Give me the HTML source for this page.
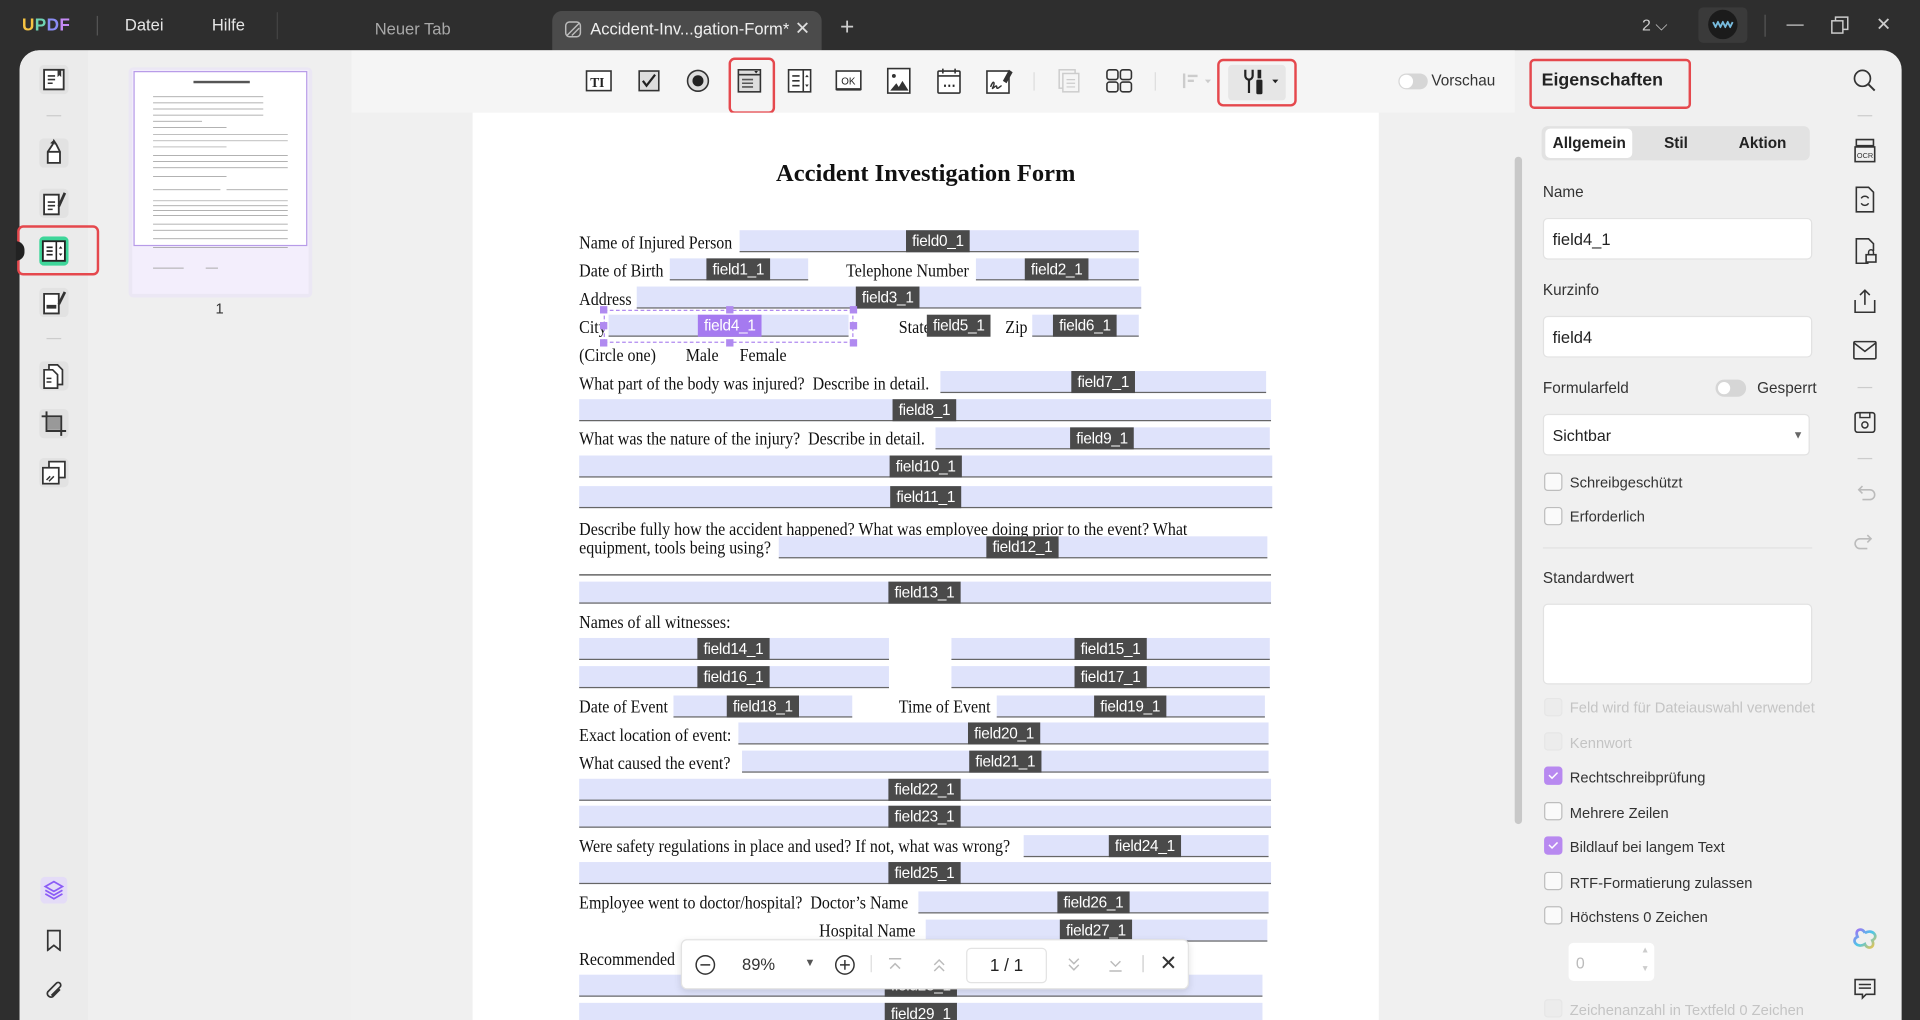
<!DOCTYPE html>
<html><head><meta charset="utf-8">
<style>
*{box-sizing:border-box;margin:0;padding:0}
html,body{width:1920px;height:1020px;overflow:hidden;background:#2e2e2e}
#w{position:absolute;left:0;top:0;width:1568px;height:833px;transform:scale(1.22449);transform-origin:0 0;font-family:"Liberation Sans",sans-serif;background:#2e2e2e}
.a{position:absolute}
.tb{color:#e6e6e6;font-size:13.5px}
.d{font-family:"Liberation Serif",serif;font-size:14.5px;color:#111;position:absolute;white-space:nowrap;transform:scaleX(.9) translateY(1px);transform-origin:0 50%;line-height:16px}
.f{position:absolute;height:18px;background:#dfe3fb;border-bottom:1.3px solid #666}
.l{position:absolute;height:18px;line-height:18px;background:#4a4a4a;color:#fff;font-size:12.5px;padding:0 5px;transform:translateX(-50%);white-space:nowrap;letter-spacing:-.2px}
.ic{position:absolute;width:24px;height:24px}
.p{color:#333;font-size:12.5px;position:absolute;white-space:nowrap}
.inp{position:absolute;background:#fff;border:1px solid #e2e2e2;border-radius:4px}
.cb{position:absolute;width:15px;height:15px;border:1.3px solid #bdbdbd;border-radius:3px;background:#fafafa}
.cb.on{background:#b889f0;border-color:#b889f0}
.cb.dis{border-color:#e6e6e6;background:#ececec}
.ri{position:absolute;left:1512px;width:22px;height:22px}
</style></head><body><div id="w">
<!-- title bar -->
<div class="a" style="left:18px;top:12px;font-weight:bold;font-size:14px;letter-spacing:.3px"><span style="color:#f6c443">U</span><span style="color:#6fd3b4">P</span><span style="color:#8b8df5">D</span><span style="color:#c58af5">F</span></div>
<div class="a" style="left:79px;top:13px;width:1px;height:16px;background:#555"></div>
<div class="a tb" style="left:102px;top:13px">Datei</div>
<div class="a tb" style="left:173px;top:13px">Hilfe</div>
<div class="a" style="left:226px;top:10px;width:1px;height:22px;background:#444"></div>
<div class="a" style="left:306px;top:16px;color:#a8a8a8;font-size:13.5px">Neuer Tab</div>
<div class="a" style="left:451px;top:9px;width:220px;height:32px;background:#4b4b4b;border-radius:8px 8px 0 0"></div>
<svg class="a" style="left:461px;top:17px" width="14" height="14" viewBox="0 0 14 14"><rect x="1" y="1" width="12" height="12" rx="3" fill="none" stroke="#bbb" stroke-width="1.2"/><path d="M2 12L12 2M6 12L12 6" stroke="#bbb" stroke-width="1.2"/></svg>
<div class="a" style="left:482px;top:16px;color:#f0f0f0;font-size:13.5px">Accident-Inv...gation-Form*</div>
<div class="a" style="left:649px;top:14px;color:#ddd;font-size:15px">✕</div>
<div class="a" style="left:686px;top:11px;color:#ccc;font-size:20px;font-weight:300">+</div>
<div class="a" style="left:1341px;top:13px;color:#ccc;font-size:13px">2 ⌵</div>
<div class="a" style="left:1387px;top:6px;width:40px;height:29px;background:#3a3a3a;border-radius:4px"></div>
<div class="a" style="left:1395px;top:8px;width:24px;height:24px;border-radius:50%;background:#1b1b1b"></div>
<svg class="a" style="left:1398px;top:17px" width="18" height="6" viewBox="0 0 18 6"><path d="M1 1l2 4 2-4 2 4 2-4 2 4 2-4 2 4 2-4" fill="none" stroke="#7bd" stroke-width="1.5"/></svg>
<div class="a" style="left:1441px;top:12px;width:1px;height:18px;background:#555"></div>
<div class="a" style="left:1459px;top:20px;width:14px;height:1.3px;background:#ccc"></div>
<svg class="a" style="left:1495px;top:13px" width="15" height="15" viewBox="0 0 15 15"><rect x="1" y="4" width="9" height="10" fill="none" stroke="#ccc" stroke-width="1.2"/><path d="M4 4V1h10v10h-4" fill="none" stroke="#ccc" stroke-width="1.2"/></svg>
<div class="a" style="left:1532px;top:11px;color:#ccc;font-size:15px">✕</div>

<!-- main -->
<div class="a" style="left:16px;top:41px;width:1537px;height:792px;background:#f0f0f0;border-radius:16px 16px 0 0;overflow:hidden">
 <div class="a" style="left:0;top:0;width:56px;height:792px;background:#ebebeb"></div>
 <div class="a" style="left:56px;top:0;width:215px;height:792px;background:#efefef"></div>
 <div class="a" style="left:271px;top:0;width:950px;height:51px;background:#f5f5f5"></div>
</div>
<!-- left rail icons -->
<svg class="a" style="left:32px;top:53px" width="24" height="24" viewBox="0 0 24 24"><rect x="0" y="0" width="24" height="24" rx="4" fill="#e2e2e2"/><rect x="4" y="4" width="16" height="16" fill="#fff" stroke="#333" stroke-width="1.5"/><path d="M7 9h6M7 12h6M7 15h4" stroke="#333" stroke-width="1.3"/><path d="M15 4v6l1.5-1.5L18 10V4" fill="#333"/></svg>
<div class="a" style="left:38px;top:94px;width:12px;height:1px;background:#ccc"></div>
<svg class="a" style="left:32px;top:113px" width="24" height="24" viewBox="0 0 24 24"><rect width="24" height="24" rx="4" fill="#e2e2e2"/><path d="M7 20V11l4-6 1-3 2 3 3 6v9z" fill="#fff" stroke="#333" stroke-width="1.5"/><path d="M7 11h10" stroke="#333" stroke-width="1.5"/><path d="M9 4l2-2 2 3z" fill="#333"/></svg>
<svg class="a" style="left:32px;top:154px" width="24" height="24" viewBox="0 0 24 24"><rect width="24" height="24" rx="4" fill="#e2e2e2"/><path d="M4 5h12v16H4z" fill="#fff" stroke="#333" stroke-width="1.5"/><path d="M7 11h6M7 14h6M7 17h4" stroke="#333" stroke-width="1.3"/><path d="M15 14l5-11 2 1-5 11z" fill="#333"/></svg>
<div class="a" style="left:14px;top:184px;width:67px;height:41px;border:2.5px solid #e5484d;border-radius:5px"></div>
<div class="a" style="left:13px;top:197px;width:7px;height:16px;background:#222;border-radius:0 8px 8px 0"></div>
<svg class="a" style="left:32px;top:193px" width="24" height="24" viewBox="0 0 24 24"><rect width="24" height="24" rx="4" fill="#3ed69a"/><rect x="3" y="4" width="18" height="16" fill="#fff" stroke="#222" stroke-width="1.5"/><path d="M14 4v16M6 9h5M6 12h5M6 15h5" stroke="#222" stroke-width="1.3"/><path d="M16 10l1.5-2 1.5 2zM16 14l1.5 2 1.5-2z" fill="#222"/></svg>
<svg class="a" style="left:32px;top:235px" width="24" height="24" viewBox="0 0 24 24"><rect width="24" height="24" rx="4" fill="#e2e2e2"/><path d="M4 5h12v16H4z" fill="#fff" stroke="#333" stroke-width="1.5"/><path d="M6 14h8v3H6z" fill="#333"/><path d="M15 13l5-10 2 1-5 10z" fill="#333"/></svg>
<div class="a" style="left:38px;top:276px;width:12px;height:1px;background:#ccc"></div>
<svg class="a" style="left:32px;top:295px" width="24" height="24" viewBox="0 0 24 24"><rect width="24" height="24" rx="4" fill="#e2e2e2"/><path d="M8 3h7l4 4v12H8z" fill="#fff" stroke="#333" stroke-width="1.4"/><path d="M4 7h7l4 4v11H4z" fill="#fff" stroke="#333" stroke-width="1.4"/><path d="M6 14h4M6 17h4" stroke="#333" stroke-width="1.2"/></svg>
<svg class="a" style="left:32px;top:334px" width="24" height="24" viewBox="0 0 24 24"><rect width="24" height="24" rx="4" fill="#e2e2e2"/><path d="M6 2v16h16M2 6h16v16" fill="none" stroke="#333" stroke-width="1.6"/><rect x="7" y="7" width="10" height="10" fill="#999"/></svg>
<svg class="a" style="left:32px;top:374px" width="24" height="24" viewBox="0 0 24 24"><rect width="24" height="24" rx="4" fill="#e2e2e2"/><rect x="8" y="3" width="13" height="13" fill="#fff" stroke="#333" stroke-width="1.4"/><rect x="3" y="8" width="13" height="13" fill="#fff" stroke="#333" stroke-width="1.4"/><path d="M6 18l3-3M8 19l4-4" stroke="#333" stroke-width="1.2"/></svg>
<svg class="a" style="left:33px;top:716px" width="22" height="22" viewBox="0 0 22 22"><rect width="22" height="22" rx="4" fill="#e4dcf7"/><path d="M11 4l7 4-7 4-7-4z" fill="none" stroke="#8b5cf6" stroke-width="1.4"/><path d="M4 11l7 4 7-4M4 14l7 4 7-4" fill="none" stroke="#8b5cf6" stroke-width="1.4"/></svg>
<svg class="a" style="left:36px;top:759px" width="16" height="18" viewBox="0 0 16 18"><path d="M3 1h10v16l-5-4-5 4z" fill="none" stroke="#333" stroke-width="1.4"/></svg>
<svg class="a" style="left:35px;top:799px" width="18" height="20" viewBox="0 0 18 20"><path d="M14 9l-6 6a3 3 0 01-4-4l7-7a2 2 0 013 3l-7 7" fill="none" stroke="#333" stroke-width="1.4"/></svg>

<!-- thumbnail -->
<div class="a" style="left:105px;top:55px;width:150px;height:188px;background:#ebe7f4;border-radius:4px"></div>
<div class="a" style="left:108px;top:57px;width:144px;height:183px;background:#f3eefc"></div>
<div class="a" style="left:109px;top:58px;width:142px;height:143px;background:#fff;border:1px solid #b79be8"></div>
<svg class="a" style="left:120px;top:62px" width="120" height="160" viewBox="0 0 120 160"><rect x="38" y="4" width="46" height="2" fill="#555"/><g stroke="#999" stroke-width=".6"><path d="M5 17h90M5 22h90M5 27h90M5 32h90M5 37h40M5 42h60M5 48h110M5 53h110M5 58h60M5 65h110M5 70h110M5 75h110M5 82h60M5 93h55M65 93h50M5 102h110M5 106h110M5 110h110M5 114h110M5 121h110M5 126h110M5 133h110M5 140h110"/></g><path d="M5 157h25M48 157h10" stroke="#aaa" stroke-width=".8"/></svg>
<div class="a" style="left:176px;top:245px;font-size:12px;color:#333">1</div>

<!-- toolbar icons -->
<svg class="a" style="left:478px;top:56px" width="22" height="20" viewBox="0 0 22 20"><rect x="1" y="2" width="20" height="16" fill="#fff" stroke="#333" stroke-width="1.3"/><text x="4" y="15" font-family="Liberation Serif" font-weight="bold" font-size="11" fill="#222">TI</text></svg>
<svg class="a" style="left:521px;top:57px" width="18" height="18" viewBox="0 0 18 18"><rect x="1" y="1" width="16" height="16" fill="#ddd" stroke="#333" stroke-width="1.3"/><path d="M4 9l3 4 7-9" fill="none" stroke="#222" stroke-width="1.8"/></svg>
<svg class="a" style="left:560px;top:56px" width="20" height="20" viewBox="0 0 20 20"><circle cx="10" cy="10" r="8.5" fill="#ddd" stroke="#333" stroke-width="1.3"/><circle cx="10" cy="10" r="4.5" fill="#222"/></svg>
<div class="a" style="left:595px;top:47px;width:38px;height:46px;border:2.5px solid #e5484d;border-radius:5px"></div>
<svg class="a" style="left:601px;top:55px" width="22" height="22" viewBox="0 0 22 22"><rect x="2" y="2" width="18" height="18" fill="#ddd" stroke="#333" stroke-width="1.3"/><path d="M2 6h18" stroke="#333" stroke-width="1.3"/><path d="M15 3l1.5 2 1.5-2z" fill="#222"/><path d="M5 10h9M5 13h9M5 16h9" stroke="#555" stroke-width="1.3"/></svg>
<svg class="a" style="left:642px;top:55px" width="22" height="22" viewBox="0 0 22 22"><rect x="2" y="2" width="18" height="18" fill="#fff" stroke="#333" stroke-width="1.3"/><path d="M14 2v18M5 7h6M5 11h6M5 15h6" stroke="#333" stroke-width="1.3"/><path d="M15.5 8l1.5-2 1.5 2zM15.5 14l1.5 2 1.5-2z" fill="#333"/></svg>
<svg class="a" style="left:682px;top:56px" width="22" height="20" viewBox="0 0 22 20"><rect x="1" y="2" width="20" height="15" fill="#fff" stroke="#333" stroke-width="1.3"/><path d="M1 17h20" stroke="#333" stroke-width="2"/><text x="5" y="13" font-size="8" font-family="Liberation Sans" fill="#222">OK</text></svg>
<svg class="a" style="left:724px;top:55px" width="20" height="22" viewBox="0 0 20 22"><rect x="1" y="1" width="18" height="20" fill="#fff" stroke="#333" stroke-width="1.3"/><circle cx="6" cy="7" r="1.6" fill="#333"/><path d="M3 19l5-6 2 3 3-5 5 8z" fill="#333"/></svg>
<svg class="a" style="left:764px;top:54px" width="22" height="24" viewBox="0 0 22 24"><rect x="2" y="4" width="18" height="18" rx="1" fill="#fff" stroke="#333" stroke-width="1.3"/><path d="M2 8h18M6 2v4M16 2v4" stroke="#333" stroke-width="1.3"/><path d="M7 16h1.5M10.5 16h1.5M14 16h1.5" stroke="#222" stroke-width="1.8"/></svg>
<svg class="a" style="left:804px;top:54px" width="24" height="24" viewBox="0 0 24 24"><rect x="2" y="4" width="18" height="18" fill="#fff" stroke="#333" stroke-width="1.3"/><path d="M5 17c2-6 4-4 2 0s3-3 3 0 3-1 4-1" fill="none" stroke="#333" stroke-width="1.2"/><path d="M15 12l5-9 3 2-5 9z" fill="#333"/></svg>
<div class="a" style="left:844px;top:59px;width:1px;height:15px;background:#ddd"></div>
<svg class="a" style="left:862px;top:55px" width="22" height="22" viewBox="0 0 22 22"><rect x="3" y="2" width="13" height="15" fill="#f5f5f5" stroke="#ccc" stroke-width="1.2"/><rect x="6" y="5" width="13" height="15" fill="#f5f5f5" stroke="#ccc" stroke-width="1.2"/><path d="M9 10h7M9 13h7M9 16h7" stroke="#ccc"/></svg>
<svg class="a" style="left:903px;top:56px" width="22" height="20" viewBox="0 0 22 20"><rect x="1" y="1" width="9" height="8" rx="2" fill="none" stroke="#333" stroke-width="1.3"/><rect x="12" y="1" width="9" height="8" rx="2" fill="none" stroke="#333" stroke-width="1.3"/><rect x="1" y="11" width="9" height="8" rx="2" fill="none" stroke="#333" stroke-width="1.3"/><rect x="12" y="11" width="9" height="8" rx="2" fill="none" stroke="#333" stroke-width="1.3"/></svg>
<div class="a" style="left:943px;top:59px;width:1px;height:15px;background:#ddd"></div>
<svg class="a" style="left:966px;top:59px" width="26" height="14" viewBox="0 0 26 14"><path d="M1 1v12M4 3h8M4 7h5" stroke="#ccc" stroke-width="2"/><path d="M18 6l2.5 3 2.5-3z" fill="#ccc"/></svg>
<div class="a" style="left:994px;top:48px;width:65px;height:39px;border:2.5px solid #e5484d;border-radius:5px"></div>
<div class="a" style="left:1003px;top:53px;width:47px;height:29px;background:#e6e6e6;border-radius:3px"></div>
<svg class="a" style="left:1013px;top:55px" width="34" height="24" viewBox="0 0 34 24"><path d="M4 2v5a3 3 0 006 0V2M7 10v11" fill="none" stroke="#222" stroke-width="1.8"/><rect x="14" y="2" width="3" height="7" fill="#222"/><rect x="13" y="10" width="5" height="12" rx="1" fill="#222"/><path d="M26 10l2.5 3 2.5-3z" fill="#222"/></svg>
<div class="a" style="left:1142px;top:60px;width:24px;height:13px;border-radius:7px;background:#d6d6d6"></div>
<div class="a" style="left:1143px;top:61px;width:11px;height:11px;border-radius:50%;background:#fff"></div>
<div class="a" style="left:1169px;top:59px;font-size:12.5px;color:#333">Vorschau</div>

<!-- page -->
<div class="a" style="left:386px;top:92px;width:740px;height:741px;background:#fff;overflow:hidden">
<div style="position:absolute;left:0;top:0;width:740px;height:741px;transform:translate(-386px,-92px)">
<div class="a" style="left:0;top:131px;width:1512px;text-align:center;font-family:'Liberation Serif',serif;font-weight:bold;font-size:20px;color:#111">Accident Investigation Form</div>

<div class="d" style="left:473px;top:190px">Name of Injured Person</div>
<div class="f" style="left:604px;top:188px;width:326px"></div><div class="l" style="left:766px;top:188px">field0_1</div>

<div class="d" style="left:473px;top:213px">Date of Birth</div>
<div class="f" style="left:547px;top:211px;width:113px"></div><div class="l" style="left:603px;top:211px">field1_1</div>
<div class="d" style="left:691px;top:213px">Telephone Number</div>
<div class="f" style="left:797px;top:211px;width:133px"></div><div class="l" style="left:863px;top:211px">field2_1</div>

<div class="d" style="left:473px;top:236px">Address</div>
<div class="f" style="left:520px;top:234px;width:412px"></div><div class="l" style="left:725px;top:234px">field3_1</div>

<div class="d" style="left:473px;top:259px">City</div>
<div class="f" style="left:497px;top:257px;width:196px"></div><div class="l" style="left:596px;top:257px;background:#a57af0">field4_1</div>
<div class="a" style="left:493px;top:253px;width:204px;height:27px;border:1.2px dashed #b08af0"></div>
<div class="a" style="left:490px;top:250px;width:6px;height:6px;background:#b08af0"></div><div class="a" style="left:593px;top:250px;width:6px;height:6px;background:#b08af0"></div><div class="a" style="left:694px;top:250px;width:6px;height:6px;background:#b08af0"></div>
<div class="a" style="left:490px;top:263px;width:6px;height:6px;background:#b08af0"></div><div class="a" style="left:694px;top:263px;width:6px;height:6px;background:#b08af0"></div>
<div class="a" style="left:490px;top:277px;width:6px;height:6px;background:#b08af0"></div><div class="a" style="left:593px;top:277px;width:6px;height:6px;background:#b08af0"></div><div class="a" style="left:694px;top:277px;width:6px;height:6px;background:#b08af0"></div>
<div class="d" style="left:734px;top:259px">State</div>
<div class="l" style="left:783px;top:257px">field5_1</div>
<div class="d" style="left:821px;top:259px">Zip</div>
<div class="f" style="left:843px;top:257px;width:87px"></div><div class="l" style="left:886px;top:257px">field6_1</div>

<div class="d" style="left:473px;top:282px">(Circle one)</div><div class="d" style="left:560px;top:282px">Male</div><div class="d" style="left:604px;top:282px">Female</div>

<div class="d" style="left:473px;top:305px">What part of the body was injured?&nbsp; Describe in detail.</div>
<div class="f" style="left:768px;top:303px;width:266px"></div><div class="l" style="left:901px;top:303px">field7_1</div>
<div class="f" style="left:473px;top:326px;width:565px"></div><div class="l" style="left:755px;top:326px">field8_1</div>

<div class="d" style="left:473px;top:350px">What was the nature of the injury?&nbsp; Describe in detail.</div>
<div class="f" style="left:764px;top:349px;width:273px"></div><div class="l" style="left:900px;top:349px">field9_1</div>
<div class="f" style="left:473px;top:372px;width:566px"></div><div class="l" style="left:756px;top:372px">field10_1</div>
<div class="f" style="left:473px;top:397px;width:566px"></div><div class="l" style="left:756px;top:397px">field11_1</div>

<div class="d" style="left:473px;top:424px">Describe fully how the accident happened? What was employee doing prior to the event? What</div>
<div class="d" style="left:473px;top:439px">equipment, tools being using?</div>
<div class="f" style="left:636px;top:438px;width:399px"></div><div class="l" style="left:835px;top:438px">field12_1</div>
<div class="a" style="left:473px;top:469px;width:565px;height:1px;background:#444"></div>
<div class="f" style="left:473px;top:475px;width:565px"></div><div class="l" style="left:755px;top:475px">field13_1</div>

<div class="d" style="left:473px;top:500px">Names of all witnesses:</div>
<div class="f" style="left:473px;top:521px;width:253px"></div><div class="l" style="left:599px;top:521px">field14_1</div>
<div class="f" style="left:777px;top:521px;width:260px"></div><div class="l" style="left:907px;top:521px">field15_1</div>
<div class="f" style="left:473px;top:544px;width:253px"></div><div class="l" style="left:599px;top:544px">field16_1</div>
<div class="f" style="left:777px;top:544px;width:260px"></div><div class="l" style="left:907px;top:544px">field17_1</div>

<div class="d" style="left:473px;top:569px">Date of Event</div>
<div class="f" style="left:550px;top:568px;width:146px"></div><div class="l" style="left:623px;top:568px">field18_1</div>
<div class="d" style="left:734px;top:569px">Time of Event</div>
<div class="f" style="left:814px;top:568px;width:219px"></div><div class="l" style="left:923px;top:568px">field19_1</div>

<div class="d" style="left:473px;top:592px">Exact location of event:</div>
<div class="f" style="left:603px;top:590px;width:433px"></div><div class="l" style="left:820px;top:590px">field20_1</div>
<div class="d" style="left:473px;top:615px">What caused the event?</div>
<div class="f" style="left:606px;top:613px;width:430px"></div><div class="l" style="left:821px;top:613px">field21_1</div>
<div class="f" style="left:473px;top:636px;width:565px"></div><div class="l" style="left:755px;top:636px">field22_1</div>
<div class="f" style="left:473px;top:658px;width:565px"></div><div class="l" style="left:755px;top:658px">field23_1</div>

<div class="d" style="left:473px;top:683px">Were safety regulations in place and used? If not, what was wrong?</div>
<div class="f" style="left:836px;top:682px;width:200px"></div><div class="l" style="left:935px;top:682px">field24_1</div>
<div class="f" style="left:473px;top:704px;width:565px"></div><div class="l" style="left:755px;top:704px">field25_1</div>

<div class="d" style="left:473px;top:729px">Employee went to doctor/hospital?&nbsp; Doctor’s Name</div>
<div class="f" style="left:750px;top:728px;width:286px"></div><div class="l" style="left:893px;top:728px">field26_1</div>
<div class="d" style="left:669px;top:752px">Hospital Name</div>
<div class="f" style="left:756px;top:751px;width:279px"></div><div class="l" style="left:895px;top:751px">field27_1</div>
<div class="d" style="left:473px;top:775px">Recommended</div>
<div class="f" style="left:473px;top:796px;width:558px"></div><div class="l" style="left:752px;top:796px">field28_1</div>
<div class="f" style="left:473px;top:819px;width:558px"></div><div class="l" style="left:752px;top:819px">field29_1</div>
</div></div>

<!-- zoom bar -->
<div class="a" style="left:556px;top:767px;width:415px;height:41px;background:#fff;border:1px solid #e3e3e3;border-radius:5px;box-shadow:0 2px 6px rgba(0,0,0,.12)"></div>
<svg class="a" style="left:567px;top:779px" width="18" height="18" viewBox="0 0 18 18"><circle cx="9" cy="9" r="7.5" fill="none" stroke="#333" stroke-width="1.2"/><path d="M5 9h8" stroke="#333" stroke-width="1.2"/></svg>
<div class="a" style="left:606px;top:780px;font-size:13.5px;color:#333">89%</div>
<div class="a" style="left:657px;top:781px;font-size:9px;color:#555">▼</div>
<svg class="a" style="left:681px;top:779px" width="18" height="18" viewBox="0 0 18 18"><circle cx="9" cy="9" r="7.5" fill="none" stroke="#333" stroke-width="1.2"/><path d="M5 9h8M9 5v8" stroke="#333" stroke-width="1.2"/></svg>
<div class="a" style="left:711px;top:780px;width:1px;height:14px;background:#ddd"></div>
<svg class="a" style="left:724px;top:781px" width="14" height="14" viewBox="0 0 14 14"><path d="M2 2h10M3 10l4-4 4 4" fill="none" stroke="#bbb" stroke-width="1.2"/></svg>
<svg class="a" style="left:760px;top:781px" width="14" height="14" viewBox="0 0 14 14"><path d="M3 7l4-4 4 4M3 12l4-4 4 4" fill="none" stroke="#bbb" stroke-width="1.2"/></svg>
<div class="a" style="left:789px;top:774px;width:66px;height:29px;border:1px solid #e3e3e3;border-radius:4px;text-align:center;line-height:27px;font-size:14px;color:#222">1 / 1</div>
<svg class="a" style="left:870px;top:781px" width="14" height="14" viewBox="0 0 14 14"><path d="M3 2l4 4 4-4M3 7l4 4 4-4" fill="none" stroke="#bbb" stroke-width="1.2"/></svg>
<svg class="a" style="left:904px;top:781px" width="14" height="14" viewBox="0 0 14 14"><path d="M3 4l4 4 4-4M2 12h10" fill="none" stroke="#bbb" stroke-width="1.2"/></svg>
<div class="a" style="left:933px;top:780px;width:1px;height:14px;background:#ccc"></div>
<div class="a" style="left:947px;top:777px;font-size:17px;color:#333">✕</div>

<!-- scrollbar -->
<div class="a" style="left:1237px;top:128px;width:6px;height:545px;background:#c8c8c8;border-radius:3px"></div>

<!-- properties -->
<div class="a" style="left:1249px;top:48px;width:132px;height:41px;border:2.5px solid #e5484d;border-radius:4px"></div>
<div class="a" style="left:1259px;top:58px;font-size:14.5px;font-weight:bold;color:#222">Eigenschaften</div>
<div class="a" style="left:1259px;top:103px;width:219px;height:28px;background:#e2e2e2;border-radius:5px"></div>
<div class="a" style="left:1262px;top:105px;width:71px;height:24px;background:#fff;border-radius:4px"></div>
<div class="a" style="left:1268px;top:110px;font-size:12.5px;font-weight:bold;color:#222">Allgemein</div>
<div class="a" style="left:1359px;top:110px;font-size:12.5px;font-weight:bold;color:#222">Stil</div>
<div class="a" style="left:1420px;top:110px;font-size:12.5px;font-weight:bold;color:#222">Aktion</div>
<div class="p" style="left:1260px;top:150px">Name</div>
<div class="inp" style="left:1260px;top:178px;width:220px;height:34px"></div>
<div class="p" style="left:1268px;top:188px;font-size:13.5px;color:#222">field4_1</div>
<div class="p" style="left:1260px;top:230px">Kurzinfo</div>
<div class="inp" style="left:1260px;top:258px;width:220px;height:34px"></div>
<div class="p" style="left:1268px;top:268px;font-size:13.5px;color:#222">field4</div>
<div class="p" style="left:1260px;top:310px">Formularfeld</div>
<div class="a" style="left:1401px;top:310px;width:25px;height:14px;border-radius:7px;background:#d6d6d6"></div>
<div class="a" style="left:1403px;top:312px;width:10px;height:10px;border-radius:50%;background:#fff"></div>
<div class="p" style="left:1435px;top:310px">Gesperrt</div>
<div class="inp" style="left:1260px;top:338px;width:218px;height:34px"></div>
<div class="p" style="left:1268px;top:348px;font-size:13px;color:#222">Sichtbar</div>
<div class="a" style="left:1464px;top:350px;font-size:9px;color:#666">▼</div>
<div class="cb" style="left:1261px;top:386px"></div><div class="p" style="left:1282px;top:387px;font-size:12px">Schreibgeschützt</div>
<div class="cb" style="left:1261px;top:414px"></div><div class="p" style="left:1282px;top:415px;font-size:12px">Erforderlich</div>
<div class="a" style="left:1260px;top:447px;width:220px;height:1px;background:#e2e2e2"></div>
<div class="p" style="left:1260px;top:465px">Standardwert</div>
<div class="inp" style="left:1260px;top:493px;width:220px;height:66px"></div>
<div class="cb dis" style="left:1261px;top:570px"></div><div class="p" style="left:1282px;top:571px;font-size:12px;color:#c4c4c4">Feld wird für Dateiauswahl verwendet</div>
<div class="cb dis" style="left:1261px;top:598px"></div><div class="p" style="left:1282px;top:600px;font-size:12px;color:#c4c4c4">Kennwort</div>
<div class="cb on" style="left:1261px;top:626px"></div><svg class="a" style="left:1264px;top:630px" width="9" height="7" viewBox="0 0 9 7"><path d="M1 3l2.5 2.5L8 1" fill="none" stroke="#fff" stroke-width="1.2"/></svg><div class="p" style="left:1282px;top:628px;font-size:12px">Rechtschreibprüfung</div>
<div class="cb" style="left:1261px;top:655px"></div><div class="p" style="left:1282px;top:657px;font-size:12px">Mehrere Zeilen</div>
<div class="cb on" style="left:1261px;top:683px"></div><svg class="a" style="left:1264px;top:687px" width="9" height="7" viewBox="0 0 9 7"><path d="M1 3l2.5 2.5L8 1" fill="none" stroke="#fff" stroke-width="1.2"/></svg><div class="p" style="left:1282px;top:685px;font-size:12px">Bildlauf bei langem Text</div>
<div class="cb" style="left:1261px;top:712px"></div><div class="p" style="left:1282px;top:714px;font-size:12px">RTF-Formatierung zulassen</div>
<div class="cb" style="left:1261px;top:740px"></div><div class="p" style="left:1282px;top:742px;font-size:12px">Höchstens 0 Zeichen</div>
<div class="a" style="left:1281px;top:770px;width:70px;height:31px;background:#fff;border-radius:4px"></div>
<div class="p" style="left:1287px;top:779px;color:#bbb;font-size:13px">0</div>
<div class="a" style="left:1340px;top:773px;font-size:7px;color:#ccc">▲</div><div class="a" style="left:1340px;top:788px;font-size:7px;color:#ccc">▼</div>
<div class="cb dis" style="left:1261px;top:816px"></div><div class="p" style="left:1282px;top:818px;font-size:12px;color:#c4c4c4">Zeichenanzahl in Textfeld 0 Zeichen</div>

<!-- right rail -->
<svg class="ri" style="top:55px" viewBox="0 0 22 22"><circle cx="9" cy="9" r="6.5" fill="none" stroke="#333" stroke-width="1.4"/><path d="M14 14l5 5" stroke="#333" stroke-width="1.6"/></svg>
<div class="a" style="left:1517px;top:94px;width:12px;height:1px;background:#ccc"></div>
<svg class="ri" style="top:112px" viewBox="0 0 22 22"><path d="M4 2h14v5H4z" fill="none" stroke="#333" stroke-width="1.3"/><rect x="3" y="8" width="16" height="12" fill="none" stroke="#333" stroke-width="1.3"/><text x="4.5" y="17" font-size="6" font-family="Liberation Sans" fill="#333">OCR</text></svg>
<svg class="ri" style="top:152px" viewBox="0 0 22 22"><path d="M4 1h10l4 4v16H4z" fill="none" stroke="#333" stroke-width="1.3"/><path d="M8 10a3.5 3.5 0 016 0M14 14a3.5 3.5 0 01-6 0" fill="none" stroke="#333" stroke-width="1.2"/></svg>
<svg class="ri" style="top:194px" viewBox="0 0 22 22"><path d="M14 21H4V1h10l4 4v6" fill="none" stroke="#333" stroke-width="1.3"/><rect x="12" y="14" width="8" height="6" fill="none" stroke="#333" stroke-width="1.3"/><path d="M14 14v-2a2 2 0 014 0v2" fill="none" stroke="#333" stroke-width="1.2"/></svg>
<svg class="ri" style="top:235px" viewBox="0 0 22 22"><path d="M3 10v10h16V10M11 2v12M7 6l4-4 4 4" fill="none" stroke="#333" stroke-width="1.3"/></svg>
<svg class="ri" style="top:275px" viewBox="0 0 22 22"><rect x="2" y="4" width="18" height="14" rx="1" fill="none" stroke="#333" stroke-width="1.3"/><path d="M2 5l9 7 9-7" fill="none" stroke="#333" stroke-width="1.3"/></svg>
<div class="a" style="left:1517px;top:316px;width:12px;height:1px;background:#ccc"></div>
<svg class="ri" style="top:334px" viewBox="0 0 22 22"><rect x="3" y="3" width="16" height="16" rx="2" fill="none" stroke="#333" stroke-width="1.3"/><path d="M7 3v4h8V3" fill="none" stroke="#333" stroke-width="1.2"/><circle cx="11" cy="13" r="2.5" fill="none" stroke="#333" stroke-width="1.2"/></svg>
<div class="a" style="left:1517px;top:374px;width:12px;height:1px;background:#ccc"></div>
<svg class="ri" style="top:392px" viewBox="0 0 22 22"><path d="M6 8h9a4 4 0 010 8H9M9 5L6 8l3 3" fill="none" stroke="#bbb" stroke-width="1.3"/></svg>
<svg class="ri" style="top:432px" viewBox="0 0 22 22"><path d="M16 8H7a4 4 0 000 8h6M13 5l3 3-3 3" fill="none" stroke="#bbb" stroke-width="1.3"/></svg>
<svg class="ri" style="top:756px" viewBox="0 0 22 22"><path d="M11 6c-2-5-9-3-6 3-6 3 0 10 6 6 2 5 9 3 6-3 6-3 0-10-6-6" fill="none" stroke="url(#g)" stroke-width="2.2"/><defs><linearGradient id="g" x1="0" y1="0" x2="1" y2="1"><stop offset="0" stop-color="#a66cf5"/><stop offset=".5" stop-color="#4bc7e8"/><stop offset="1" stop-color="#f6c443"/></linearGradient></defs></svg>
<svg class="ri" style="top:797px" viewBox="0 0 22 22"><path d="M3 3h16v12h-7l-3 3v-3H3z" fill="none" stroke="#333" stroke-width="1.3"/><path d="M6 7h10M6 10h10" stroke="#333" stroke-width="1.2"/></svg>
</div></body></html>
